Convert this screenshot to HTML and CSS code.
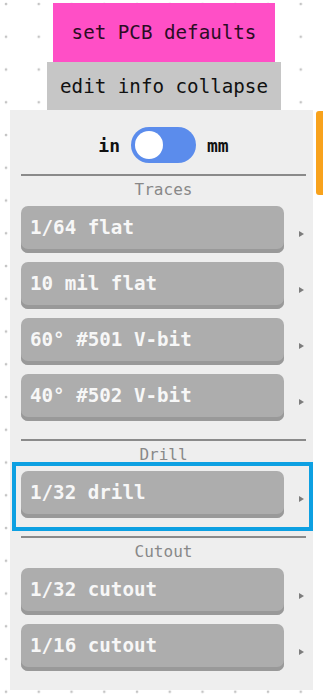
FILE: index.html
```html
<!DOCTYPE html>
<html lang="en">
<head>
    <meta charset="UTF-8">
    <meta name="viewport" content="width=device-width, initial-scale=1.0">
    <title>PCB settings</title>
    <link rel="stylesheet" href="styles.css">
</head>
<body>
    <div class="top-buttons">
        <button class="btn-defaults">set PCB defaults</button>
        <button class="btn-collapse">edit info collapse</button>
    </div>

    <div class="main">
        <div class="panel">
            <div class="units">
                <span class="unit">in</span>
                <span class="toggle"><span class="knob"></span></span>
                <span class="unit">mm</span>
            </div>

            <hr class="sep first">
            <div class="section-title">Traces</div>
            <div class="tool-row"><button class="tool">1/64 flat</button><span class="arrow"></span></div>
            <div class="tool-row"><button class="tool">10 mil flat</button><span class="arrow"></span></div>
            <div class="tool-row"><button class="tool">60° #501 V-bit</button><span class="arrow"></span></div>
            <div class="tool-row"><button class="tool">40° #502 V-bit</button><span class="arrow"></span></div>

            <hr class="sep">
            <div class="section-title">Drill</div>
            <div class="tool-row selected"><button class="tool">1/32 drill</button><span class="arrow"></span></div>

            <hr class="sep">
            <div class="section-title">Cutout</div>
            <div class="tool-row"><button class="tool">1/32 cutout</button><span class="arrow"></span></div>
            <div class="tool-row"><button class="tool">1/16 cutout</button><span class="arrow"></span></div>
        </div>

        <div class="scroll-track">
            <div class="scroll-thumb"></div>
        </div>
    </div>
</body>
</html>
```

FILE: styles.css
```css
/* General */
html, body {
    margin: 0;
    padding: 0;
}

body {
    font-family: 'DejaVu Sans Mono', 'Liberation Mono', monospace;
    background-color: #ffffff;
    background-image: radial-gradient(circle at 6px 4px, #c4c4c4 1px, transparent 1.7px);
    background-size: 32.75px 32.75px;
    height: 699px;
    overflow: hidden;
}

button {
    font-family: inherit;
    border: none;
    cursor: pointer;
}

/* Top buttons */
.top-buttons {
    display: flex;
    flex-direction: column;
    align-items: center;
    padding-top: 3px;
    padding-left: 5px;
}

.btn-defaults {
    width: 222px;
    height: 59px;
    background: #ff4fc6;
    color: #2b0d24;
    font-size: 19.2px;
    padding: 0;
}

.btn-collapse {
    width: 234px;
    height: 48px;
    background: #c6c6c6;
    color: #111;
    font-size: 19.2px;
    padding: 0;
}

/* Panel */
.main {
    display: flex;
    margin-left: 10px;
}

.panel {
    width: 303px;
    height: 580px;
    box-sizing: border-box;
    background: #eeeeee;
    padding: 17px 7px 0 11px;
}

.scroll-track {
    width: 7px;
    margin-left: 3px;
}

.scroll-thumb {
    height: 84px;
    margin-top: 1px;
    background: #f8a21c;
    border-radius: 3px 0 0 3px;
}

/* Unit switch */
.units {
    display: flex;
    justify-content: center;
    align-items: center;
    gap: 11px;
    height: 36px;
    margin-bottom: 11px;
}

.unit {
    font-weight: bold;
    font-size: 18px;
    color: #111;
}

.toggle {
    display: flex;
    align-items: center;
    width: 65px;
    height: 36px;
    box-sizing: border-box;
    padding-left: 4px;
    border-radius: 18px;
    background: #5b8cec;
}

.knob {
    width: 28px;
    height: 28px;
    border-radius: 50%;
    background: #ffffff;
}

/* Sections */
.sep {
    border: none;
    height: 2px;
    margin: 0;
    background: #8a8a8a;
}

.tool-row + .sep {
    margin-top: 18px;
}

.section-title {
    text-align: center;
    color: #888;
    font-size: 16px;
    line-height: 27px;
    margin-bottom: 3px;
}

.tool-row {
    position: relative;
    display: flex;
    align-items: center;
}

.tool-row + .tool-row {
    margin-top: 9px;
}

.tool {
    width: 263px;
    height: 47px;
    padding: 0 0 4px 9px;
    text-align: left;
    background: #adadad;
    color: #f7f7f7;
    font-size: 19.2px;
    font-weight: bold;
    border-radius: 7px;
    box-shadow: inset 0 -4px 0 #999999;
}

.arrow {
    margin: 9px 0 0 15px;
    width: 0;
    height: 0;
    border-left: 5px solid #7c7c7c;
    border-top: 3px solid transparent;
    border-bottom: 3px solid transparent;
}

/* Selected tool highlight */
.tool-row.selected::after {
    content: "";
    position: absolute;
    top: -9px;
    left: -9px;
    right: -7px;
    bottom: -13px;
    border: 4px solid #0da0e2;
    pointer-events: none;
}
```
